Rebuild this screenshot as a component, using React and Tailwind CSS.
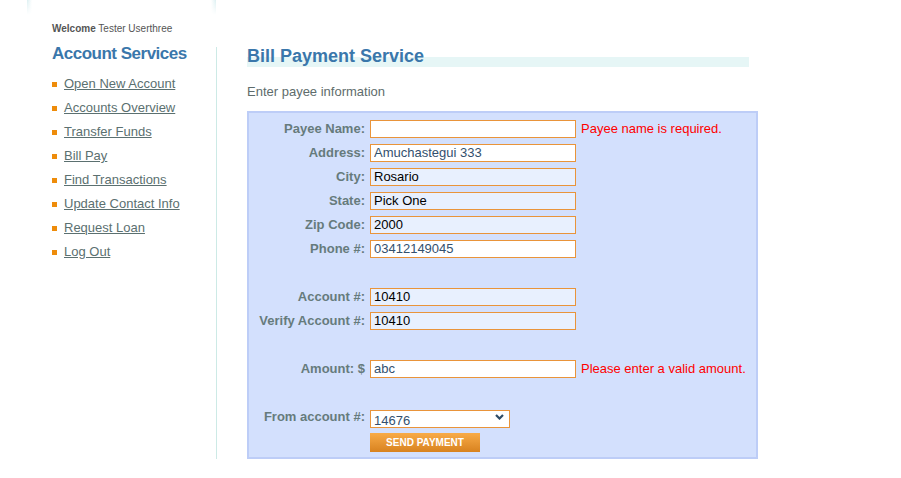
const LINKS = [
  'Open New Account',
  'Accounts Overview',
  'Transfer Funds',
  'Bill Pay',
  'Find Transactions',
  'Update Contact Info',
  'Request Loan',
  'Log Out',
]

// filled = browser autofill look (light blue, black text)
const ROWS = [
  { label: 'Payee Name:', value: '', error: 'Payee name is required.' },
  { label: 'Address:', value: 'Amuchastegui 333' },
  { label: 'City:', value: 'Rosario', filled: true },
  { label: 'State:', value: 'Pick One', filled: true },
  { label: 'Zip Code:', value: '2000', filled: true },
  { label: 'Phone #:', value: '03412149045' },
  null,
  { label: 'Account #:', value: '10410', filled: true },
  { label: 'Verify Account #:', value: '10410', filled: true },
  null,
  { label: 'Amount: $', value: 'abc', error: 'Please enter a valid amount.' },
  null,
]

function Field({ row }) {
  if (!row) return <div className="h-[24px]" />
  return (
    <div className="flex items-center h-[24px]">
      <label className="w-[116px] text-right text-[13px] font-bold text-[#667b7c] whitespace-nowrap">
        {row.label}
      </label>
      <input
        readOnly
        value={row.value}
        className={
          'ml-[5px] w-[206px] h-[18px] border border-[#e9943a] pl-[3px] text-[13px] outline-none ' +
          (row.filled ? 'bg-[#e8f0fe] text-black' : 'bg-white text-[#33506e]')
        }
      />
      {row.error && <span className="ml-[5px] text-[13px] text-[#ff0000] whitespace-nowrap">{row.error}</span>}
    </div>
  )
}

export default function App() {
  return (
    <div className="w-[901px] h-[478px] bg-white font-['Liberation_Sans',Arial,sans-serif] overflow-hidden">
      <div className="ml-[27px] w-[189px] h-[15px] bg-[linear-gradient(to_right,#dcf0f2,#ffffff_5px,#ffffff_calc(100%-5px),#dcf0f2)] [mask-image:linear-gradient(to_bottom,black,transparent)]" />
      <div className="h-[32px] pt-[8px] pl-[52px] text-[10px] leading-[12px] text-[#555]">
        <b>Welcome</b> Tester Userthree
      </div>
      <div className="flex">
        <div className="ml-[52px] w-[165px] h-[412px] border-r border-[#cdeae6]">
          <h2 className="text-[17px] leading-[14px] font-bold tracking-[-0.5px] text-[#3a77ab]">Account Services</h2>
          <ul className="mt-[11px]">
            {LINKS.map((l) => (
              <li key={l} className="flex items-center h-[24px]">
                <span className="w-[5px] h-[5px] bg-[#ee8c0a] mt-[1px]" />
                <a href="#" className="ml-[7px] text-[13px] text-[#5b7070] underline">
                  {l}
                </a>
              </li>
            ))}
          </ul>
        </div>
        <div className="ml-[30px] -mt-[1px]">
          <h1 className="w-[502px] h-[21px] text-[18px] leading-[20px] font-bold text-[#3a77ab] bg-[linear-gradient(to_bottom,transparent_11px,#e6f6f6_11px)]">
            Bill Payment Service
          </h1>
          <p className="mt-[17px] text-[13px] leading-[16px] text-[#5e6c6c]">Enter payee information</p>
          <div className="mt-[11px] w-[511px] h-[348px] bg-[#d3e0fd] border-2 border-[#bdcdf7] pt-[4px]">
            {ROWS.map((r, i) => (
              <Field key={i} row={r} />
            ))}
            <div className="flex items-center h-[24px]">
              <label className="w-[116px] text-right text-[13px] font-bold text-[#667b7c] whitespace-nowrap">
                From account #:
              </label>
              <div className="relative ml-[5px] w-[140px] h-[18px]">
                <select className="appearance-none w-full h-full bg-white border border-[#e9943a] pl-[3px] text-[13px] text-[#33506e] outline-none">
                  <option>14676</option>
                </select>
                <svg className="absolute right-[6px] top-[6px] pointer-events-none" width="9" height="6" viewBox="0 0 9 6">
                  <path d="M1 1l3.5 3.5L8 1" stroke="#2d4b66" strokeWidth="2.2" fill="none" />
                </svg>
              </div>
            </div>
            <button className="ml-[121px] mt-[3px] w-[110px] h-[19px] bg-[linear-gradient(to_bottom,#f8ab48,#d8821f)] text-white text-[10px] font-bold leading-[19px]">
              SEND PAYMENT
            </button>
          </div>
        </div>
      </div>
    </div>
  )
}
